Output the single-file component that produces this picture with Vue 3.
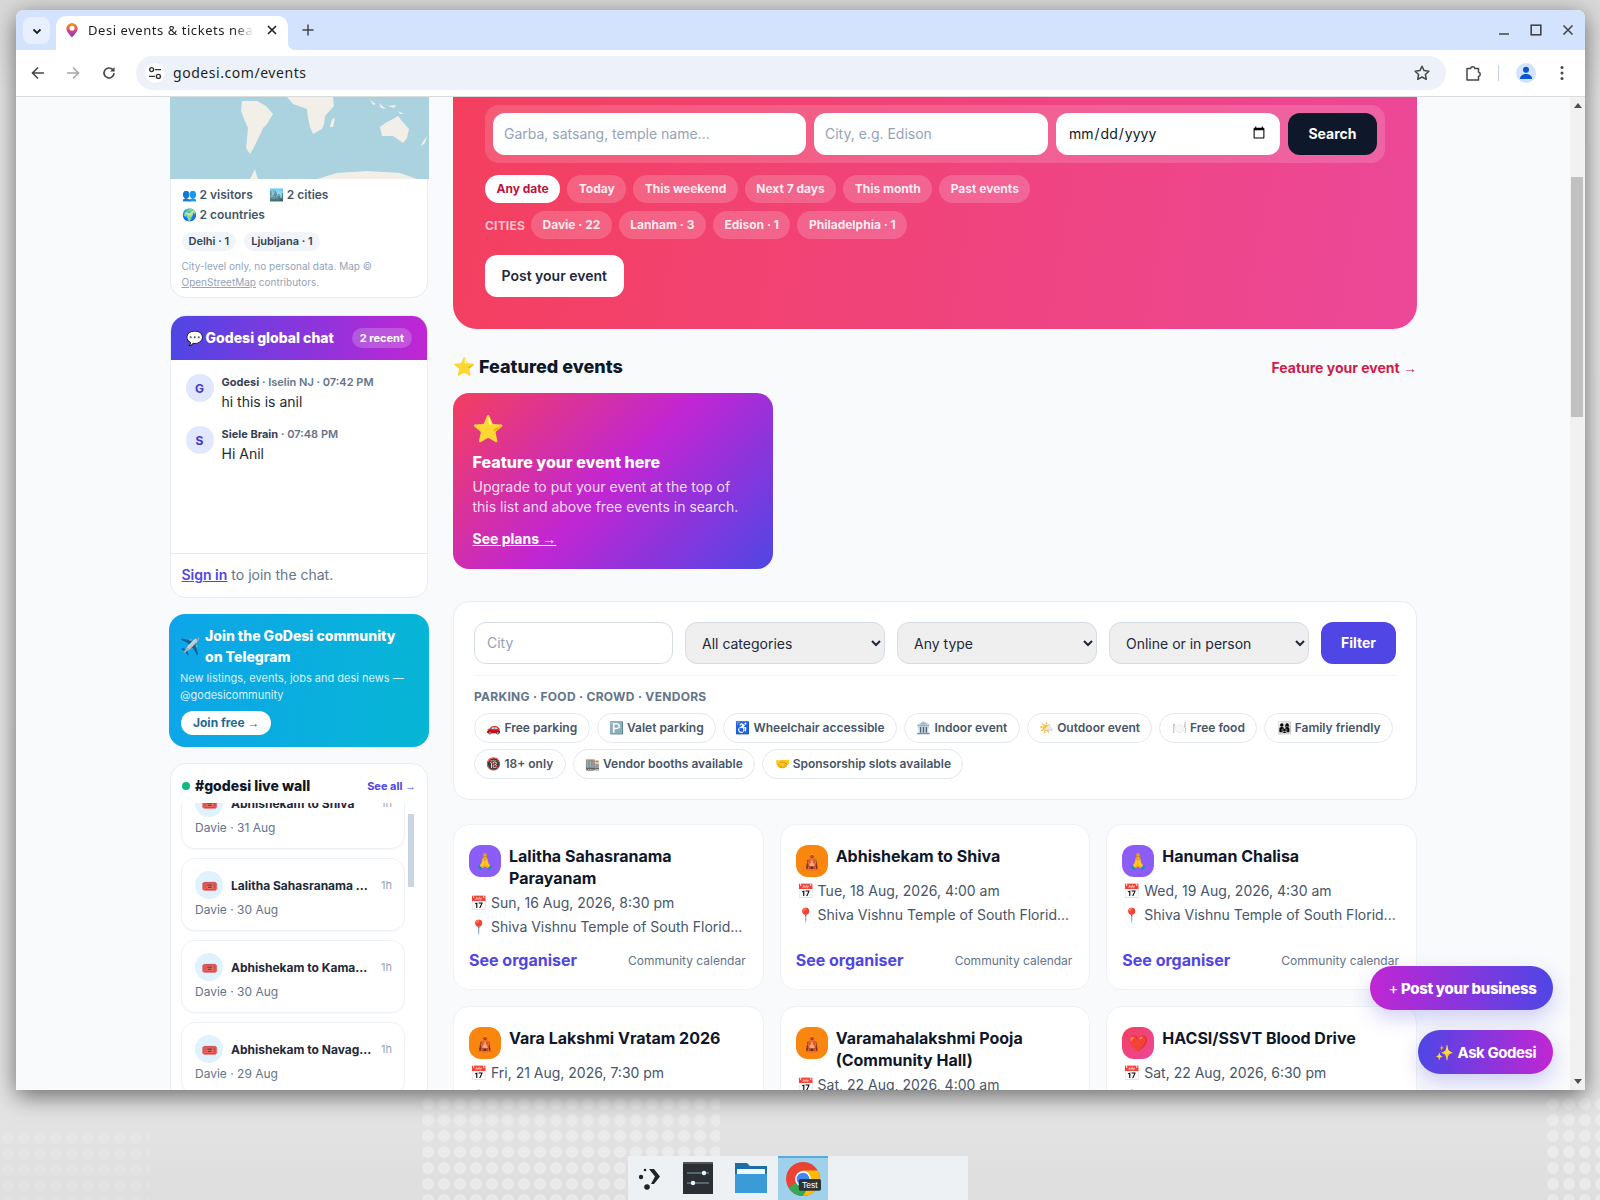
<template>
  <div class="desktop">
    <div class="dots dots-a"></div>
    <div class="dots dots-b"></div>
    <div class="dots dots-c"></div>

    <div class="browser">
      <div class="tabstrip">
        <div class="tab-search">
          <svg width="12" height="12" viewBox="0 0 12 12"><path d="M2.5 4.5 6 8l3.5-3.5" fill="none" stroke="#1f1f1f" stroke-width="1.8"/></svg>
        </div>
        <div class="tab">
          <svg class="favicon" width="14" height="16" viewBox="0 0 14 16">
            <defs><linearGradient id="fav" x1="0" y1="0" x2="0" y2="1"><stop offset="0" stop-color="#f59e0b"/><stop offset="0.5" stop-color="#e0457b"/><stop offset="1" stop-color="#6d3fc4"/></linearGradient></defs>
            <path d="M7 1a5.6 5.6 0 0 0-5.6 5.6C1.4 10.4 7 15.4 7 15.4s5.6-5 5.6-8.8A5.6 5.6 0 0 0 7 1z" fill="url(#fav)"/>
            <circle cx="7" cy="6.2" r="2.5" fill="#fff"/>
          </svg>
          <span class="tab-title">Desi events &amp; tickets nea</span>
          <svg class="tab-close" width="10" height="10" viewBox="0 0 10 10"><path d="M1 1l8 8M9 1l-8 8" stroke="#1f1f1f" stroke-width="1.6"/></svg>
        </div>
        <svg class="tab-new" width="12" height="12" viewBox="0 0 12 12"><path d="M6 .5v11M.5 6h11" stroke="#444" stroke-width="1.5"/></svg>
        <div class="win-ctrls">
          <svg width="12" height="12" viewBox="0 0 12 12"><path d="M1 10h10" stroke="#444" stroke-width="1.5"/></svg>
          <svg width="12" height="12" viewBox="0 0 12 12"><rect x="1.2" y="1.2" width="9.6" height="9.6" fill="none" stroke="#444" stroke-width="1.6"/></svg>
          <svg width="12" height="12" viewBox="0 0 12 12"><path d="M1.5 1.5l9 9M10.5 1.5l-9 9" stroke="#444" stroke-width="1.6"/></svg>
        </div>
      </div>

      <div class="toolbar">
        <svg class="nav-back" width="16" height="16" viewBox="0 0 16 16"><path d="M14 8H2.5M8 2.5 2.5 8 8 13.5" fill="none" stroke="#474747" stroke-width="1.6"/></svg>
        <svg class="nav-fwd" width="16" height="16" viewBox="0 0 16 16"><path d="M2 8h11.5M8 2.5 13.5 8 8 13.5" fill="none" stroke="#a8a8a8" stroke-width="1.6"/></svg>
        <svg class="nav-reload" width="16" height="16" viewBox="0 0 16 16"><path d="M13 8a5 5 0 1 1-1.5-3.6L13 6" fill="none" stroke="#474747" stroke-width="1.6"/><path d="M13.5 2v4.6H9z" fill="#474747"/></svg>
        <div class="omnibox">
          <span class="tune">
            <svg width="14" height="14" viewBox="0 0 14 14"><circle cx="3.6" cy="3.6" r="2" fill="none" stroke="#333" stroke-width="1.4"/><path d="M7 3.6h6M1 10.4h6" stroke="#333" stroke-width="1.4"/><circle cx="10.4" cy="10.4" r="2" fill="none" stroke="#333" stroke-width="1.4"/></svg>
          </span>
          <span class="url">godesi.com/events</span>
          <svg class="url-star" width="18" height="18" viewBox="0 0 18 18"><path d="M9 2.2l2.1 4.4 4.8.6-3.5 3.3.9 4.8L9 13l-4.3 2.3.9-4.8-3.5-3.3 4.8-.6z" fill="none" stroke="#474747" stroke-width="1.5" stroke-linejoin="round"/></svg>
        </div>
        <svg class="ext" width="18" height="18" viewBox="0 0 18 18"><path d="M3 4.5h3.600a2.200 2.200 0 0 1 4.300 0h3.600v3.600a2.200 2.200 0 0 1 0 4.300v3.600H3z" fill="none" stroke="#474747" stroke-width="1.500" stroke-linejoin="round"/></svg>
        <span class="tb-sep"></span>
        <span class="avatar-chrome">
          <svg width="16" height="16" viewBox="0 0 16 16"><circle cx="8" cy="4.8" r="3" fill="#0b57d0"/><path d="M1.8 14c.4-3.4 3-5 6.2-5s5.800 1.600 6.200 5z" fill="#0b57d0"/></svg>
        </span>
        <svg class="kebab" width="4" height="16" viewBox="0 0 4 16"><circle cx="2" cy="2.500" r="1.500" fill="#474747"/><circle cx="2" cy="8" r="1.500" fill="#474747"/><circle cx="2" cy="13.500" r="1.500" fill="#474747"/></svg>
      </div>

      <div class="viewport">
        <div class="page">
          <aside class="side">
            <section class="card visitors">
              <svg class="map" width="259" height="82" viewBox="0 0 259 82">
                <rect width="259" height="82" fill="#aad3df"/>
                <g fill="#f2efe9">
                  <path d="M72 4 87 4 96 9 103 17 97 27 93 31 90 38 87 44 83 52 80 57 76 51 77 42 78 31 74 22 71 14z"/>
                  <path d="M117 0H163L164 9 155 19 154 27 152 32 143 37 140 30 138 21 137 12 123 7z"/>
                  <path d="M162 22 165 21 163 30 160 30z"/>
                  <path d="M210 30 217 25 223 22 228 19 232 24 239 32 237 41 233 46 226 41 223 39 212 39z"/>
                  <path d="M147 82 167 76 197 74 230 76 247 82z"/>
                  <path d="M80 82 85 72 86 76 88 82z"/>
                  <path d="M200 3 206 7 203 8zM209 6 216 12 211 11zM218 9 226 8 224 11zM228 14 234 17 230 17zM252 46 257 39 255 46 251 49z"/>
                  <path d="M126 0 130 0 129 2z"/>
                </g>
              </svg>
              <div class="visitors-body">
                <div class="stats">
                  <span>👥 2 visitors</span>
                  <span>🏙️ 2 cities</span>
                  <span>🌍 2 countries</span>
                </div>
                <div class="geo-chips">
                  <span class="geo-chip">Delhi · 1</span>
                  <span class="geo-chip">Ljubljana · 1</span>
                </div>
                <p class="geo-note">City-level only, no personal data. Map © <u>OpenStreetMap</u> contributors.</p>
              </div>
            </section>

            <section class="card chat">
              <header class="chat-head">
                <span class="chat-title">💬 Godesi global chat</span>
                <span class="chat-badge">2 recent</span>
              </header>
              <div class="chat-body">
                <div v-for="m in messages" :key="m.name" class="msg">
                  <span class="msg-avatar">{{ m.initial }}</span>
                  <div>
                    <div class="msg-meta"><b>{{ m.name }}</b> · {{ m.meta }}</div>
                    <div class="msg-text">{{ m.text }}</div>
                  </div>
                </div>
              </div>
              <footer class="chat-foot"><a class="signin">Sign in</a> to join the chat.</footer>
            </section>

            <section class="telegram">
              <div class="tg-top">
                <span class="tg-plane">✈️</span>
                <span class="tg-title">Join the GoDesi community on Telegram</span>
              </div>
              <p class="tg-sub">New listings, events, jobs and desi news — @godesicommunity</p>
              <a class="tg-btn">Join free <span class="arr">→</span></a>
            </section>

            <section class="card wall">
              <header class="wall-head">
                <span class="live-dot"></span>
                <span class="wall-title">#godesi live wall</span>
                <a class="wall-all">See all <span class="arr">→</span></a>
              </header>
              <div class="wall-scroll">
                <div class="wall-list">
                  <div v-for="w in wallItems" :key="w.title" class="wall-item">
                    <div class="wall-row">
                      <span class="wall-icon">🎟️</span>
                      <span class="wall-name">{{ w.title }}</span>
                      <span class="wall-time">{{ w.time }}</span>
                    </div>
                    <div class="wall-sub">{{ w.sub }}</div>
                  </div>
                </div>
                <div class="wall-bar"><span></span></div>
              </div>
            </section>
          </aside>

          <main class="main">
            <section class="hero">
              <form class="hero-search" @submit.prevent>
                <input class="hs-q" placeholder="Garba, satsang, temple name..." />
                <input class="hs-city" placeholder="City, e.g. Edison" />
                <input class="hs-date" type="date" />
                <button class="hs-btn">Search</button>
              </form>
              <div class="pill-row">
                <span v-for="(p, i) in datePills" :key="p" class="pill" :class="{ on: i === 0 }">{{ p }}</span>
              </div>
              <div class="pill-row cities">
                <span class="cities-label">CITIES</span>
                <span v-for="c in cityPills" :key="c" class="pill">{{ c }}</span>
              </div>
              <a class="hero-post">Post your event</a>
            </section>

            <div class="feat-head">
              <h2>⭐ Featured events</h2>
              <a>Feature your event <span class="arr">→</span></a>
            </div>

            <section class="feat-card">
              <div class="feat-star">⭐</div>
              <h3>Feature your event here</h3>
              <p>Upgrade to put your event at the top of this list and above free events in search.</p>
              <a>See plans <span class="arr">→</span></a>
            </section>

            <section class="filters">
              <div class="filter-row">
                <input placeholder="City" />
                <select><option>All categories</option></select>
                <select><option>Any type</option></select>
                <select><option>Online or in person</option></select>
                <button>Filter</button>
              </div>
              <div class="amen-label">PARKING · FOOD · CROWD · VENDORS</div>
              <div class="amen-chips">
                <span v-for="a in amenities" :key="a" class="amen">{{ a }}</span>
              </div>
            </section>

            <section class="events">
              <article v-for="e in events" :key="e.title" class="event">
                <div class="event-head">
                  <span class="event-icon" :class="e.kind">{{ e.icon }}</span>
                  <h4>{{ e.title }}</h4>
                </div>
                <div class="event-line">📅 {{ e.date }}</div>
                <div class="event-line">📍 {{ e.place }}</div>
                <div class="event-foot">
                  <a>See organiser</a>
                  <span>Community calendar</span>
                </div>
              </article>
            </section>
          </main>
        </div>

        <a class="float post-biz"><span class="plus">+</span> Post your business</a>
        <a class="float ask">✨ <span>Ask Godesi</span></a>

        <div class="scrollbar">
          <span class="sb-up"></span>
          <span class="sb-thumb"></span>
          <span class="sb-down"></span>
        </div>
      </div>
    </div>

    <div class="taskbar">
      <span class="task t-kde">
        <svg width="30" height="30" viewBox="0 0 30 30"><circle cx="9" cy="7" r="1.300" fill="#222"/><circle cx="5" cy="14" r="2.200" fill="#222"/><circle cx="11" cy="24" r="2.800" fill="#222"/><path d="M13 6h5l6 7.500-6 7.500h-3l4-7.500z" fill="#222"/></svg>
      </span>
      <span class="task t-set">
        <svg width="30" height="32" viewBox="0 0 30 32"><rect width="30" height="32" fill="#2b2f33"/><rect y="0" width="30" height="2" fill="#555"/><path d="M4 11h22M4 21h22" stroke="#8a9aa8" stroke-width="1.200"/><circle cx="21" cy="11" r="2.200" fill="#e8f4fb"/><circle cx="10" cy="21" r="2.200" fill="#e8f4fb"/></svg>
      </span>
      <span class="task t-files">
        <svg width="32" height="30" viewBox="0 0 32 30"><path d="M0 0h12l3 3h17v27H0z" fill="#1d6ea3"/><rect x="2" y="6" width="28" height="6" fill="#f2f7fa"/><path d="M0 11h32v19H0z" fill="#3a9bd6"/></svg>
      </span>
      <span class="task active">
        <svg width="36" height="36" viewBox="0 0 34 34">
          <circle cx="17" cy="17" r="16" fill="#ea4335"/>
          <path d="M17 17 3.200 25A16 16 0 0 0 17 33l7.500-13z" fill="#34a853"/>
          <path d="M17 9h13.800A16 16 0 0 1 17 33l7-12z" fill="#fbbc05"/>
          <circle cx="17" cy="17" r="7.500" fill="#fff"/>
          <circle cx="17" cy="17" r="6" fill="#4285f4"/>
          <rect x="13" y="17" width="21" height="11" rx="1.500" fill="#2f3338"/>
          <text x="23.500" y="25.500" font-size="8" fill="#fff" text-anchor="middle" font-family="Liberation Sans, sans-serif">Test</text>
        </svg>
      </span>
    </div>
  </div>
</template>

<script setup>
const messages = [
  { initial: 'G', name: 'Godesi', meta: 'Iselin NJ · 07:42 PM', text: 'hi this is anil' },
  { initial: 'S', name: 'Siele Brain', meta: '07:48 PM', text: 'Hi Anil' }
]

const wallItems = [
  { title: 'Abhishekam to Shiva', time: '1h', sub: 'Davie · 31 Aug' },
  { title: 'Lalitha Sahasranama ...', time: '1h', sub: 'Davie · 30 Aug' },
  { title: 'Abhishekam to Kama...', time: '1h', sub: 'Davie · 30 Aug' },
  { title: 'Abhishekam to Navag...', time: '1h', sub: 'Davie · 29 Aug' }
]

const datePills = ['Any date', 'Today', 'This weekend', 'Next 7 days', 'This month', 'Past events']
const cityPills = ['Davie · 22', 'Lanham · 3', 'Edison · 1', 'Philadelphia · 1']

const amenities = [
  '🚗 Free parking',
  '🅿️ Valet parking',
  '♿ Wheelchair accessible',
  '🏛️ Indoor event',
  '🌤️ Outdoor event',
  '🍽️ Free food',
  '👨‍👩‍👧 Family friendly',
  '🔞 18+ only',
  '🏬 Vendor booths available',
  '🤝 Sponsorship slots available'
]

const temple = 'Shiva Vishnu Temple of South Florid...'
const events = [
  { title: 'Lalitha Sahasranama Parayanam', icon: '🙏', kind: 'purple', date: 'Sun, 16 Aug, 2026, 8:30 pm', place: temple },
  { title: 'Abhishekam to Shiva', icon: '🛕', kind: 'orange', date: 'Tue, 18 Aug, 2026, 4:00 am', place: temple },
  { title: 'Hanuman Chalisa', icon: '🙏', kind: 'purple', date: 'Wed, 19 Aug, 2026, 4:30 am', place: temple },
  { title: 'Vara Lakshmi Vratam 2026', icon: '🛕', kind: 'orange', date: 'Fri, 21 Aug, 2026, 7:30 pm', place: temple },
  { title: 'Varamahalakshmi Pooja (Community Hall)', icon: '🛕', kind: 'orange', date: 'Sat, 22 Aug, 2026, 4:00 am', place: temple },
  { title: 'HACSI/SSVT Blood Drive', icon: '❤️', kind: 'rose', date: 'Sat, 22 Aug, 2026, 6:30 pm', place: temple }
]
</script>

<style scoped>
.desktop {
  position: relative;
  width: 1600px;
  height: 1200px;
  overflow: hidden;
  background: linear-gradient(180deg, #d9d9d9 0, #e6e6e6 8%, #e4e4e4 92%, #dedede 100%);
  font-family: Inter, "Noto Sans", sans-serif;
  color: #0f172a;
}

.dots {
  position: absolute;
  background-image: radial-gradient(circle, #f4f4f4 5.500px, transparent 6.500px);
  background-size: 16px 16px;
  opacity: 0.5;
}
.dots-a { left: 420px; top: 1096px; width: 300px; height: 104px; }
.dots-b { left: 1545px; top: 1096px; width: 55px; height: 104px; }
.dots-c { left: 0; top: 1130px; width: 150px; height: 70px; opacity: 0.2; }

.browser {
  position: absolute;
  left: 16px;
  top: 10px;
  width: 1569px;
  height: 1080px;
  border-radius: 8px 8px 0 0;
  overflow: hidden;
  background: #fff;
  display: flex;
  flex-direction: column;
  box-shadow: 0 6px 24px rgba(0, 0, 0, 0.55);
}

/* chrome */
.tabstrip {
  height: 40px;
  flex: none;
  background: #d3e3fd;
  display: flex;
  align-items: flex-end;
  padding-left: 7px;
  font-family: "Noto Sans", sans-serif;
}
.tab-search {
  width: 27px;
  height: 27px;
  margin-bottom: 6px;
  border-radius: 8px;
  background: #e8f0fe;
  display: flex;
  align-items: center;
  justify-content: center;
}
.tab {
  width: 232px;
  height: 34px;
  margin-left: 6px;
  background: #fff;
  border-radius: 10px 10px 0 0;
  display: flex;
  align-items: center;
  padding: 0 0 6px 9px;
  box-sizing: border-box;
  position: relative;
}
.tab::after {
  content: "";
  position: absolute;
  left: 100%;
  bottom: 0;
  width: 8px;
  height: 8px;
  background: radial-gradient(circle at 100% 0, transparent 8px, #fff 8.500px);
}
.favicon { flex: none; }
.tab-title {
  margin-left: 9px;
  font-size: 13px;
  letter-spacing: 0.55px;
  color: #1f1f1f;
  white-space: nowrap;
  width: 166px;
  overflow: hidden;
  -webkit-mask-image: linear-gradient(90deg, #000 88%, transparent);
  mask-image: linear-gradient(90deg, #000 88%, transparent);
}
.tab-close { margin-left: 13px; flex: none; }
.tab-new { margin: 0 0 14px 14px; }
.win-ctrls {
  margin-left: auto;
  margin-right: 11px;
  margin-bottom: 14px;
  display: flex;
  gap: 20px;
}
.toolbar {
  height: 47px;
  flex: none;
  background: #fff;
  border-bottom: 1px solid #dadce0;
  box-sizing: border-box;
  display: flex;
  align-items: center;
  padding: 0 21px 1px 14px;
}
.nav-fwd { margin-left: 19px; }
.nav-reload { margin-left: 20px; }
.omnibox {
  margin-left: 19px;
  width: 1310px;
  height: 34px;
  border-radius: 17px;
  background: #edf2fa;
  display: flex;
  align-items: center;
  padding: 0 15px 0 9px;
  box-sizing: border-box;
  font-family: "Noto Sans", sans-serif;
}
.tune {
  width: 20px;
  height: 20px;
  border-radius: 50%;
  background: #fff;
  display: flex;
  align-items: center;
  justify-content: center;
}
.url { margin-left: 8px; font-size: 14px; letter-spacing: 0.55px; color: #1f1f1f; }
.url-star { margin-left: auto; }
.ext { margin-left: 18px; }
.tb-sep { width: 1px; height: 16px; background: #c4d0e4; margin-left: 16px; }
.avatar-chrome {
  margin-left: 17px;
  width: 20px;
  height: 20px;
  border-radius: 50%;
  background: #d3e3fd;
  display: flex;
  align-items: center;
  justify-content: center;
}
.kebab { margin-left: 24px; }

/* page */
.viewport {
  position: relative;
  flex: 1;
  min-height: 0;
  overflow: hidden;
  background: #f8fafc;
}
.page {
  display: flex;
  align-items: flex-start;
  gap: 24px;
  padding-left: 153px;
}
.side {
  width: 260px;
  flex: none;
  display: flex;
  flex-direction: column;
  gap: 16px;
}
.card {
  background: #fff;
  border: 1px solid #e8edf3;
  border-radius: 16px;
  box-sizing: border-box;
  margin: 0 1px;
}
.visitors {
  border-width: 0 1px 1px;
  border-radius: 0 0 16px 16px;
  height: 201px;
  margin-bottom: 1px;
}
.map { display: block; margin-left: -1px; }
.visitors-body { padding: 6px 10.500px 0; }
.stats {
  display: flex;
  flex-wrap: wrap;
  gap: 0 16px;
  font-size: 12px;
  font-weight: 600;
  line-height: 20px;
  color: #475569;
}
.geo-chips { display: flex; gap: 8px; margin-top: 7px; }
.geo-chip {
  font-size: 11px;
  font-weight: 600;
  line-height: 19px;
  padding: 0 7px;
  border-radius: 10px;
  background: #f1f5f9;
  color: #334155;
}
.geo-note {
  margin: 8px 0 0;
  font-size: 10px;
  line-height: 15.500px;
  color: #94a3b8;
}

.chat {
  height: 283px;
  overflow: hidden;
  display: flex;
  flex-direction: column;
}
.chat-head {
  height: 45px;
  margin: -1px -1px 0;
  flex: none;
  display: flex;
  align-items: center;
  justify-content: space-between;
  padding: 0 16px 0 15.500px;
  background: linear-gradient(90deg, #4f46e5, #c026d3);
  color: #fff;
}
.chat-title { font-size: 14px; font-weight: 800; }
.chat-badge {
  font-size: 11px;
  font-weight: 700;
  line-height: 20px;
  padding: 0 8px;
  border-radius: 10px;
  background: rgba(255, 255, 255, 0.2);
}
.chat-body { flex: 1; padding: 14px 14px 0 14.500px; }
.msg { display: flex; gap: 8px; height: 52px; }
.msg-avatar {
  width: 28px;
  height: 28px;
  flex: none;
  border-radius: 50%;
  background: #e0e7ff;
  color: #4338ca;
  font-size: 12px;
  font-weight: 700;
  display: flex;
  align-items: center;
  justify-content: center;
}
.msg-meta { font-size: 11px; font-weight: 600; line-height: 16px; color: #64748b; }
.msg-meta b { color: #374151; font-weight: 700; }
.msg-text { font-size: 14px; line-height: 20px; color: #1f2937; margin-top: 2px; }
.chat-foot {
  height: 44px;
  flex: none;
  border-top: 1px solid #e2e8f0;
  padding: 0 10.500px 2px;
  box-sizing: border-box;
  display: flex;
  align-items: center;
  gap: 4px;
  font-size: 14px;
  color: #64748b;
}
.signin { color: #4f46e5; font-weight: 600; text-decoration: underline; }

.telegram {
  height: 133px;
  box-sizing: border-box;
  border-radius: 16px;
  padding: 11px 11px 0;
  background: linear-gradient(100deg, #0ea5e9, #06b6d4);
  color: #fff;
}
.tg-top { display: flex; align-items: center; gap: 8px; }
.tg-plane { font-size: 16px; width: 17px; flex: none; }
.tg-title { width: 205px; font-size: 14px; font-weight: 800; line-height: 21px; }
.tg-sub {
  margin: 3px 0 0;
  font-size: 11px;
  line-height: 17px;
  color: rgba(255, 255, 255, 0.85);
}
.tg-btn {
  display: inline-block;
  margin: 7px 0 0 1px;
  padding: 0 12px;
  line-height: 24px;
  border-radius: 12px;
  background: #fff;
  color: #1e6a96;
  font-size: 12px;
  font-weight: 700;
}

.wall { height: 340px; overflow: hidden; }
.wall-head {
  height: 25px;
  display: flex;
  align-items: center;
  padding: 9px 11px 0;
}
.live-dot { width: 8px; height: 8px; border-radius: 50%; background: #10b981; }
.wall-title { margin-left: 5px; font-size: 14px; font-weight: 800; color: #0f172a; }
.wall-all { margin-left: auto; font-size: 11px; font-weight: 700; color: #4f46e5; }
.wall-scroll {
  height: 300px;
  margin-top: 5px;
  display: flex;
  overflow: hidden;
  padding-left: 10px;
}
.wall-list {
  width: 224px;
  flex: none;
  margin-top: -27px;
  display: flex;
  flex-direction: column;
  gap: 9px;
}
.wall-item {
  height: 73px;
  flex: none;
  box-sizing: border-box;
  background: #fff;
  border: 1px solid #eef2f6;
  border-radius: 14px;
  box-shadow: 0 1px 2px rgba(15, 23, 42, 0.04);
  padding: 12px 12px 0 13px;
}
.wall-row { display: flex; align-items: center; }
.wall-icon {
  width: 28px;
  height: 28px;
  flex: none;
  border-radius: 50%;
  background: #e0f2fe;
  font-size: 14px;
  display: flex;
  align-items: center;
  justify-content: center;
}
.wall-name { margin-left: 8px; font-size: 12px; font-weight: 700; color: #1e293b; white-space: nowrap; }
.wall-time { margin-left: auto; font-size: 11px; color: #94a3b8; }
.wall-sub { margin-top: 2px; font-size: 12px; line-height: 18px; color: #64748b; }
.wall-bar { width: 6px; margin-left: 3px; padding-top: 11px; }
.wall-bar span { display: block; height: 73px; background: #cbd5e1; }

.arr { font-family: "Liberation Sans", sans-serif; font-weight: 400; }

.main { width: 964px; flex: none; }
.hero {
  height: 232px;
  box-sizing: border-box;
  padding: 8px 32px 0;
  border-radius: 0 0 24px 24px;
  background: linear-gradient(100deg, #f43f5e, #ec4899);
}
.hero-search {
  display: flex;
  gap: 8px;
  padding: 8px;
  border-radius: 14px;
  background: rgba(255, 255, 255, 0.15);
}
.hero-search input,
.hs-btn {
  height: 42px;
  box-sizing: border-box;
  border: 0;
  border-radius: 12px;
  font: 14px Inter, sans-serif;
  outline: none;
}
.hero-search input { background: #fff; padding: 0 12px 2px; color: #0f172a; }
.hero-search input::placeholder { color: #94a3b8; }
.hero-search .hs-q,
.hero-search .hs-city { padding-left: 11px; }
.hs-q { width: 313px; }
.hs-city { width: 234px; }
.hs-date { width: 224px; }
.hs-btn { width: 89px; padding-bottom: 2px; background: #0f172a; color: #fff; font-weight: 700; }
.pill-row { display: flex; align-items: center; gap: 7px; margin-top: 12px; }
.cities { margin-top: 8px; }
.pill {
  font-size: 12px;
  font-weight: 700;
  line-height: 28px;
  padding: 0 11.500px;
  border-radius: 14px;
  background: rgba(255, 255, 255, 0.18);
  color: rgba(255, 255, 255, 0.9);
}
.pill.on { background: #fff; color: #be123c; }
.cities-label {
  margin-right: -1px;
  font-size: 12px;
  font-weight: 700;
  letter-spacing: 0.2px;
  color: rgba(255, 255, 255, 0.7);
}
.hero-post {
  display: inline-block;
  margin-top: 16px;
  padding: 0 16.500px;
  line-height: 42px;
  border-radius: 12px;
  background: #fff;
  color: #1e293b;
  font-size: 14px;
  font-weight: 600;
}

.feat-head {
  display: flex;
  align-items: center;
  justify-content: space-between;
  height: 28px;
  margin-top: 23px;
}
.feat-head h2 { margin: 0; font-size: 18px; font-weight: 800; color: #0f172a; }
.feat-head a { padding-top: 2px; font-size: 14px; font-weight: 700; color: #cf1b4b; }

.feat-card {
  width: 320px;
  height: 176px;
  margin-top: 13px;
  box-sizing: border-box;
  padding: 20px 20px 20px 19.500px;
  border-radius: 16px;
  background: linear-gradient(135deg, #f43f5e, #c026d3 50%, #4f46e5);
  color: #fff;
}
.feat-star { font-size: 26px; line-height: 32px; margin-left: -1px; }
.feat-card h3 { margin: 6px 0 0; font-size: 16px; font-weight: 800; line-height: 22px; }
.feat-card p { margin: 4px 0 0; font-size: 14px; line-height: 20px; color: rgba(255, 255, 255, 0.85); }
.feat-card a { display: block; margin-top: 12px; font-size: 14px; font-weight: 700; line-height: 20px; text-decoration: underline; }

.filters {
  height: 199px;
  margin-top: 32px;
  box-sizing: border-box;
  padding: 20px;
  background: #fff;
  border: 1px solid #e8edf3;
  border-radius: 16px;
}
.filter-row {
  display: flex;
  gap: 12px;
  padding-bottom: 11px;
  border-bottom: 1px solid #f1f5f9;
}
.filter-row input,
.filter-row select,
.filter-row button {
  height: 42px;
  box-sizing: border-box;
  border-radius: 12px;
  font: 14px Inter, sans-serif;
  outline: none;
}
.filter-row input,
.filter-row select {
  border: 1px solid #d5dce5;
  padding: 0 12px;
  color: #1e293b;
}
.filter-row input {
  width: 199px;
  flex: none;
  padding-bottom: 2px;
  background: #fff;
}
.filter-row input::placeholder { color: #94a3b8; }
.filter-row select { flex: 1; min-width: 0; background-color: #efefef; }
.filter-row button {
  width: 75px;
  flex: none;
  padding-bottom: 2px;
  border: 0;
  background: #4f46e5;
  color: #fff;
  font-weight: 700;
}
.amen-label {
  margin-top: 12px;
  font-size: 12px;
  font-weight: 700;
  line-height: 18px;
  letter-spacing: 0.3px;
  color: #64748b;
}
.amen-chips { display: flex; flex-wrap: wrap; gap: 6px 7px; margin-top: 7px; }
.amen {
  font-size: 12px;
  font-weight: 600;
  line-height: 28px;
  padding: 0 11.400px;
  border: 1px solid #e2e8f0;
  border-radius: 15px;
  background: #fff;
  color: #475569;
}

.events {
  display: grid;
  grid-template-columns: repeat(3, 1fr);
  gap: 16px;
  margin-top: 24px;
}
.event {
  display: flex;
  flex-direction: column;
  box-sizing: border-box;
  min-width: 0;
  height: 166px;
  padding: 20px 17px 18px 15px;
  background: #fff;
  border: 1px solid #eef2f6;
  border-radius: 16px;
}
.event-head { display: flex; gap: 8px; margin-bottom: 2px; }
.event-icon {
  width: 32px;
  height: 32px;
  flex: none;
  border-radius: 12px;
  font-size: 16px;
  display: flex;
  align-items: center;
  justify-content: center;
}
.purple { background: #8b5cf6; }
.orange { background: #f8860f; }
.rose { background: linear-gradient(135deg, #f43f5e, #ec4899); }
.event-head h4 { margin: 0; font-size: 16px; font-weight: 700; line-height: 22px; color: #0f172a; }
.event-line {
  padding-left: 1px;
  font-size: 14px;
  line-height: 24px;
  color: #475569;
  white-space: nowrap;
  overflow: hidden;
  flex: none;
}
.event-foot {
  margin-top: auto;
  display: flex;
  align-items: center;
  justify-content: space-between;
}
.event-foot a { font-size: 16px; font-weight: 700; color: #4f46e5; line-height: 22px; }
.event-foot span { font-size: 12px; color: #64748b; }

/* floating buttons, fixed in the real page */
.float {
  position: absolute;
  right: 32px;
  height: 44px;
  border-radius: 22px;
  display: flex;
  align-items: center;
  justify-content: center;
  box-sizing: border-box;
  color: #fff;
  font-size: 15px;
  font-weight: 800;
  letter-spacing: -0.35px;
  white-space: pre;
  box-shadow: 0 8px 20px rgba(79, 70, 229, 0.25);
}
.plus { font-weight: 400; }
.post-biz {
  top: 869px;
  width: 183px;
  padding-left: 2px;
  background: linear-gradient(90deg, #c026d3, #4f46e5);
}
.ask {
  top: 933px;
  width: 135px;
  gap: 1px;
  background: linear-gradient(90deg, #4f46e5, #c026d3);
}
.ask span { font-weight: 700; letter-spacing: -0.45px; }

.scrollbar {
  position: absolute;
  right: 0;
  top: 0;
  bottom: 0;
  width: 15px;
  background: #f1f1f1;
}
.sb-up,
.sb-down {
  position: absolute;
  left: 3.500px;
  border-left: 4px solid transparent;
  border-right: 4px solid transparent;
}
.sb-up { top: 6px; border-bottom: 5px solid #505050; }
.sb-down { bottom: 6px; border-top: 5px solid #505050; }
.sb-thumb {
  position: absolute;
  left: 1px;
  width: 12px;
  top: 80px;
  height: 240px;
  background: #c1c1c1;
}

.taskbar {
  position: absolute;
  left: 628px;
  top: 1156px;
  width: 340px;
  height: 44px;
  background: #eef1f4;
  display: flex;
}
.task {
  height: 44px;
  display: flex;
  align-items: center;
  justify-content: center;
  box-sizing: border-box;
}
.t-kde { width: 45px; }
.t-set { width: 50px; }
.t-files { width: 55px; }
.task.active {
  width: 50px;
  background: #9fd0ec;
  border-top: 2px solid #5aa9dd;
}
</style>

<style>
html, body { margin: 0; overflow: hidden; }
</style>
